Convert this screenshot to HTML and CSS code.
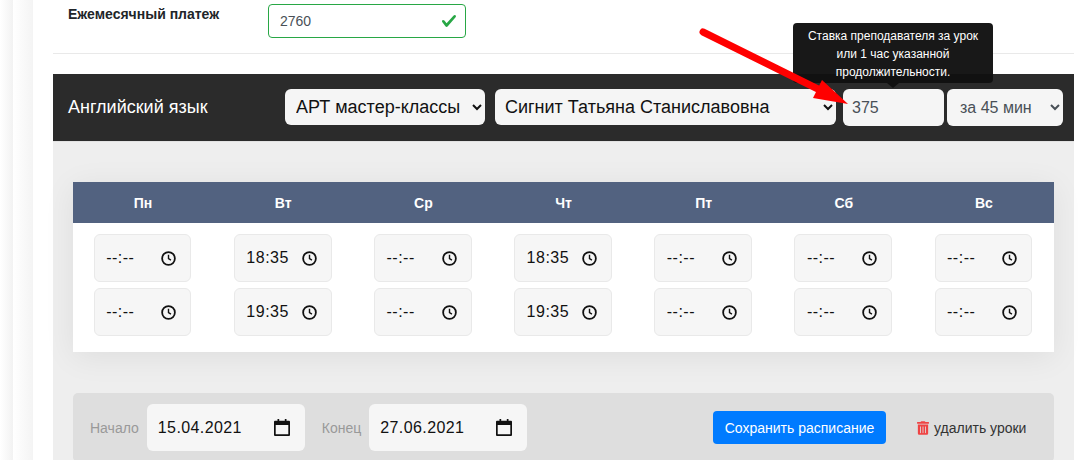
FILE: index.html
```html
<!DOCTYPE html>
<html lang="ru">
<head>
<meta charset="utf-8">
<title>Расписание</title>
<link rel="stylesheet" href="styles.css">
</head>
<body>
<svg class="icon-defs" aria-hidden="true">
  <symbol id="clock" viewBox="0 0 16 16"><circle cx="8" cy="8" r="6.800" fill="none" stroke="#111" stroke-width="1.900"/><path d="M8 4v4.200l2.600 1.600" fill="none" stroke="#111" stroke-width="1.500"/></symbol>
  <symbol id="cal" viewBox="0 0 16 17"><path fill="#111" d="M3.500 0h1.700v1.800h5.600V0h1.700v1.800H15a1 1 0 0 1 1 1V16a1 1 0 0 1-1 1H1a1 1 0 0 1-1-1V2.800a1 1 0 0 1 1-1h2.500zM1.700 6v9.300h12.600V6z"/></symbol>
</svg>
<div class="outer">
  <div class="inner">
    <main class="content">
      <div class="pay-row">
        <label class="pay-label">Ежемесячный платеж</label>
        <div class="pay-field">
          <input class="pay-input" type="text" value="2760">
          <svg class="pay-check" viewBox="0 0 8 8"><path fill="#28a745" d="M2.3 6.73L.6 4.53c-.4-1.04.46-1.4 1.1-.8l1.1 1.4 3.4-3.8c.6-.63 1.6-.27 1.2.7l-4 4.6c-.43.5-.8.4-1.1.1z"/></svg>
        </div>
      </div>
      <hr class="rule">
      <div class="subject-bar">
        <div class="subject-title">Английский язык</div>
        <select class="ctl sel-type"><option>АРТ мастер-классы</option></select>
        <select class="ctl sel-teacher"><option>Сигнит Татьяна Станиславовна</option></select>
        <input class="ctl rate" type="text" value="375">
        <select class="ctl sel-dur"><option>за 45 мин</option></select>
        <div class="tip">Ставка преподавателя за урок<br>или 1 час указанной<br>продолжительности.</div>
      </div>
      <div class="panel">
        <div class="week">
          <div class="week-head">
            <div>Пн</div><div>Вт</div><div>Ср</div><div>Чт</div><div>Пт</div><div>Сб</div><div>Вс</div>
          </div>
          <div class="week-body">
            <div class="day">
              <div class="time"><input class="time-text" type="text" value="--:--"><svg class="time-icon"><use href="#clock"/></svg></div>
              <div class="time"><input class="time-text" type="text" value="--:--"><svg class="time-icon"><use href="#clock"/></svg></div>
            </div>
            <div class="day">
              <div class="time"><input class="time-text" type="text" value="18:35"><svg class="time-icon"><use href="#clock"/></svg></div>
              <div class="time"><input class="time-text" type="text" value="19:35"><svg class="time-icon"><use href="#clock"/></svg></div>
            </div>
            <div class="day">
              <div class="time"><input class="time-text" type="text" value="--:--"><svg class="time-icon"><use href="#clock"/></svg></div>
              <div class="time"><input class="time-text" type="text" value="--:--"><svg class="time-icon"><use href="#clock"/></svg></div>
            </div>
            <div class="day">
              <div class="time"><input class="time-text" type="text" value="18:35"><svg class="time-icon"><use href="#clock"/></svg></div>
              <div class="time"><input class="time-text" type="text" value="19:35"><svg class="time-icon"><use href="#clock"/></svg></div>
            </div>
            <div class="day">
              <div class="time"><input class="time-text" type="text" value="--:--"><svg class="time-icon"><use href="#clock"/></svg></div>
              <div class="time"><input class="time-text" type="text" value="--:--"><svg class="time-icon"><use href="#clock"/></svg></div>
            </div>
            <div class="day">
              <div class="time"><input class="time-text" type="text" value="--:--"><svg class="time-icon"><use href="#clock"/></svg></div>
              <div class="time"><input class="time-text" type="text" value="--:--"><svg class="time-icon"><use href="#clock"/></svg></div>
            </div>
            <div class="day">
              <div class="time"><input class="time-text" type="text" value="--:--"><svg class="time-icon"><use href="#clock"/></svg></div>
              <div class="time"><input class="time-text" type="text" value="--:--"><svg class="time-icon"><use href="#clock"/></svg></div>
            </div>
          </div>
        </div>
        <div class="period">
          <span class="period-label">Начало</span>
          <div class="date"><input class="date-text" type="text" value="15.04.2021"><svg class="date-icon"><use href="#cal"/></svg></div>
          <span class="period-label second">Конец</span>
          <div class="date"><input class="date-text" type="text" value="27.06.2021"><svg class="date-icon"><use href="#cal"/></svg></div>
          <button class="save" type="button">Сохранить расписание</button>
          <a class="remove">
            <svg class="trash" viewBox="0 0 448 512"><path fill="#ef4444" d="M32 464a48 48 0 0 0 48 48h288a48 48 0 0 0 48-48V128H32zm272-256a16 16 0 0 1 32 0v224a16 16 0 0 1-32 0zm-96 0a16 16 0 0 1 32 0v224a16 16 0 0 1-32 0zm-96 0a16 16 0 0 1 32 0v224a16 16 0 0 1-32 0zM432 32H312l-9.400-18.700A24 24 0 0 0 281.100 0H166.800a23.700 23.700 0 0 0-21.400 13.300L136 32H16A16 16 0 0 0 0 48v32a16 16 0 0 0 16 16h416a16 16 0 0 0 16-16V48a16 16 0 0 0-16-16z"/></svg>
            <span>удалить уроки</span>
          </a>
        </div>
      </div>
    </main>
  </div>
</div>
<svg class="arrow" viewBox="0 0 1078 460"><path d="M703 32L826 93" stroke="#f00" stroke-width="7" stroke-linecap="round" fill="none"/><path fill="#f00" d="M822 80L848 104L813 98Z"/></svg>
</body>
</html>
```
FILE: styles.css
```css
* { box-sizing: border-box; }
html, body { margin: 0; height: 460px; overflow: hidden; background: #fff; }
body { font-family: "Liberation Sans", Arial, sans-serif; color: #212529; position: relative; }
.icon-defs { display: none; }

.outer { height: 460px; padding-left: 13px; background: linear-gradient(90deg, #fff 0, #f2f2f2 13px, #fff 13px); }
.inner { height: 460px; padding-left: 20px; background: linear-gradient(90deg, #fff 0, #f4f4f4 20px, #fff 20px); }
.content { margin-left: 20px; width: 1021px; }

.pay-row { display: flex; height: 53px; padding-top: 4px; }
.pay-label { width: 215px; padding: 3px 0 0 15px; font-size: 14px; font-weight: 700; line-height: 15px; }
.pay-field { position: relative; width: 198px; height: 34px; }
.pay-input { width: 100%; height: 34px; padding: 0 11px; border: 1px solid #28a745; border-radius: 4px; font: 14px "Liberation Sans", Arial, sans-serif; color: #495057; background: #fff; outline: none; }
.pay-check { position: absolute; right: 9px; top: 9px; width: 16px; height: 16px; }

.rule { margin: 0; height: 1px; border: 0; background: #e9e9e9; }

.subject-bar { position: relative; margin-top: 20px; height: 67px; padding: 15px 11px 0 0; display: flex; align-items: flex-start; background: #2b2b2b; }
.subject-title { flex: 1; padding-left: 15px; font-size: 18px; line-height: 36px; color: #fff; }
.ctl { height: 36px; border: 0; border-radius: 6px; background-color: #f5f5f5; font: 18px "Liberation Sans", Arial, sans-serif; color: #111; outline: none; }
.sel-type { width: 200px; padding-left: 7px; }
.sel-teacher { width: 341px; margin-left: 10px; padding-left: 6px; }
.rate { width: 101px; height: 37px; margin-left: 7px; padding: 0 9px; color: #495057; font-size: 16px; }
.sel-dur { width: 116px; height: 37px; margin-left: 3px; padding-left: 9px; color: #495057; font-size: 16px; }

.tip { position: absolute; left: 740px; top: -51px; width: 200px; height: 60px; padding-top: 4px; background: rgba(17, 17, 17, .97); border-radius: 4px; color: #fff; font-size: 12px; line-height: 18px; text-align: center; }
.tip::after { content: ""; position: absolute; left: 94px; bottom: -5px; border: 6px solid transparent; border-bottom: 0; border-top: 5px solid #111; }

.panel { height: 319px; padding: 40px 20px 0; background: #eee; border-top: 1px solid #e2e2e2; }
.week { background: #fff; box-shadow: 0 5px 30px rgba(0, 0, 0, .07); }
.week-head { display: grid; grid-template-columns: repeat(7, 1fr); height: 41px; align-items: center; background: #526280; color: #fff; font-size: 14px; font-weight: 700; text-align: center; }
.week-body { display: grid; grid-template-columns: repeat(7, 1fr); padding: 11px 0 16px; }
.day { display: flex; flex-direction: column; gap: 6px; padding-left: 20.7px; }
.time { display: flex; align-items: center; width: 97.700px; height: 48px; border: 1px solid #e9e9e9; border-radius: 6px; background: #f6f6f6; }
.time-text { flex: 1; min-width: 0; height: 100%; padding: 0 0 0 11.500px; border: 0; background: transparent; font: 16px "Liberation Sans", Arial, sans-serif; letter-spacing: .5px; color: #111; outline: none; }
.time-icon { flex: none; width: 15px; height: 15px; margin-right: 14px; }

.period { display: flex; align-items: center; margin-top: 41px; height: 69px; padding-left: 17px; background: #dedede; border-radius: 5px; }
.period-label { font-size: 14px; color: #999; margin-right: 8px; }
.period-label.second { margin-left: 17px; }
.date { display: flex; align-items: center; width: 158px; height: 47px; border-radius: 6px; background: #f6f6f6; }
.date-text { flex: 1; min-width: 0; height: 100%; padding: 0 0 0 11px; border: 0; background: transparent; font: 16px "Liberation Sans", Arial, sans-serif; letter-spacing: .4px; color: #111; outline: none; }
.date-icon { flex: none; width: 16px; height: 17px; margin-right: 15px; }
.save { margin-left: auto; width: 173px; height: 33px; border: 0; border-radius: 4px; background: #007bff; color: #fff; font: 14px "Liberation Sans", Arial, sans-serif; }
.remove { display: flex; align-items: center; gap: 5px; width: 168px; padding-left: 31px; font-size: 14px; color: #333; white-space: nowrap; }
.trash { flex: none; width: 12px; height: 14px; }

.arrow { position: absolute; left: 0; top: 0; width: 1078px; height: 460px; pointer-events: none; }
```
